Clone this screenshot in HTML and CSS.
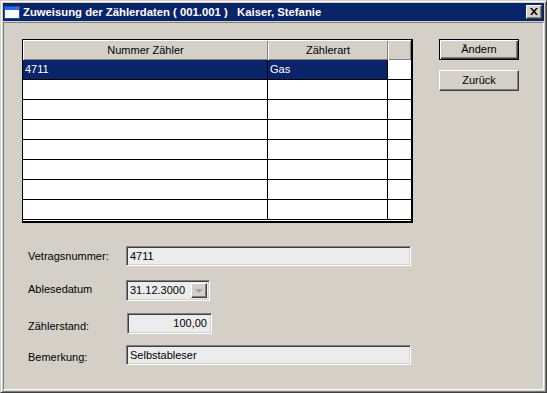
FILE: index.html
```html
<!DOCTYPE html>
<html>
<head>
    <title>Zuweisung der Zählerdaten</title>
    <link rel="stylesheet" href="styles.css">
</head>
<body>
    <div class="window">
        <div class="title-bar">
            <svg class="title-icon" width="16" height="13" viewBox="0 0 16 13">
                <rect x="0.5" y="0.5" width="15" height="12" fill="#fff" stroke="#1c4fb8"/>
                <rect x="1" y="1" width="14" height="3" fill="#1c6fe8"/>
                <rect x="12" y="1" width="2" height="2" fill="#e84830"/>
            </svg>
            <span class="title-text">Zuweisung der Zählerdaten ( 001.001 )&nbsp;&nbsp; Kaiser, Stefanie</span>
            <div class="close-btn">
                <svg width="8" height="7" viewBox="0 0 8 7">
                    <path d="M0 0 L2 0 L4 2.5 L6 0 L8 0 L5 3.5 L8 7 L6 7 L4 4.5 L2 7 L0 7 L3 3.5 Z" fill="#000"/>
                </svg>
            </div>
        </div>

        <div class="client">
            <div class="top-row">
                <div class="grid">
                    <div class="grid-row head">
                        <div class="cell">Nummer Zähler</div>
                        <div class="cell">Zählerart</div>
                        <div class="cell"></div>
                    </div>
                    <div class="grid-row">
                        <div class="cell selected">4711</div>
                        <div class="cell selected">Gas</div>
                        <div class="cell"></div>
                    </div>
                    <div class="grid-row"><div class="cell"></div><div class="cell"></div><div class="cell"></div></div>
                    <div class="grid-row"><div class="cell"></div><div class="cell"></div><div class="cell"></div></div>
                    <div class="grid-row"><div class="cell"></div><div class="cell"></div><div class="cell"></div></div>
                    <div class="grid-row"><div class="cell"></div><div class="cell"></div><div class="cell"></div></div>
                    <div class="grid-row"><div class="cell"></div><div class="cell"></div><div class="cell"></div></div>
                    <div class="grid-row"><div class="cell"></div><div class="cell"></div><div class="cell"></div></div>
                    <div class="grid-row"><div class="cell"></div><div class="cell"></div><div class="cell"></div></div>
                </div>

                <div class="buttons">
                    <div class="btn default">Ändern</div>
                    <div class="btn">Zurück</div>
                </div>
            </div>

            <div class="form">
                <div class="form-row row-1">
                    <label>Vetragsnummer:</label>
                    <div class="field wide">4711</div>
                </div>
                <div class="form-row row-2">
                    <label>Ablesedatum</label>
                    <div class="field combo">
                        <span>31.12.3000</span>
                        <div class="combo-btn"><span class="arrow"></span></div>
                    </div>
                </div>
                <div class="form-row row-3">
                    <label>Zählerstand:</label>
                    <div class="field number">100,00</div>
                </div>
                <div class="form-row row-4">
                    <label>Bemerkung:</label>
                    <div class="field wide">Selbstableser</div>
                </div>
            </div>
        </div>
    </div>
</body>
</html>
```

FILE: styles.css
```css
:root {
    --face: #d4d0c8;
    --shadow: #808080;
    --dark: #404040;
    --light: #fff;
    --navy: #0a246a;
    --field-bg: #ececec;
}

body {
    margin: 0;
    width: 547px;
    height: 393px;
    overflow: hidden;
    font-family: "Liberation Sans", Arial, sans-serif;
    font-size: 11px;
    color: #000;
    background: var(--face);
}

.window {
    box-sizing: border-box;
    width: 547px;
    height: 393px;
    padding: 2px;
    background: var(--face);
    border: 1px solid;
    border-color: var(--face) var(--dark) var(--dark) var(--face);
    box-shadow: inset 1px 1px var(--light), inset -1px -1px var(--shadow);
    display: flex;
    flex-direction: column;
}

/* Title bar */
.title-bar {
    height: 18px;
    flex-shrink: 0;
    background: var(--navy);
    display: flex;
    align-items: center;
    margin-bottom: 1px;
}

.title-icon {
    margin-left: 1px;
    margin-top: 1px;
}

.title-text {
    margin-left: 3px;
    color: #fff;
    font-weight: bold;
    font-size: 11.3px;
    white-space: nowrap;
    flex: 1;
}

.close-btn {
    box-sizing: border-box;
    width: 16px;
    height: 14px;
    margin-right: 2px;
    background: var(--face);
    border: 1px solid;
    border-color: var(--light) var(--dark) var(--dark) var(--light);
    box-shadow: inset -1px -1px var(--shadow);
    display: flex;
    align-items: center;
    justify-content: center;
}

.close-btn svg {
    margin-left: -1px;
    margin-top: -1px;
}

/* Client area */
.client {
    flex: 1;
    border: 1px solid;
    border-color: var(--shadow) var(--light) var(--light) var(--shadow);
    padding: 16px 0 0 18px;
}

.top-row {
    display: flex;
    align-items: flex-start;
}

/* Grid */
.grid {
    box-sizing: border-box;
    width: 391px;
    height: 184px;
    background: #fff;
    border-style: solid;
    border-color: #000;
    border-width: 1px 2px 2px 1px;
    overflow: hidden;
}

.grid-row {
    display: grid;
    grid-template-columns: 245px 120px 1fr;
    height: 20px;
}

.cell {
    box-sizing: border-box;
    padding-left: 2px;
    line-height: 19px;
    border-right: 1px solid #000;
    border-bottom: 1px solid #000;
    white-space: nowrap;
    overflow: hidden;
}

.cell:last-child {
    border-right: none;
}

.head .cell {
    background: var(--face);
    border: none;
    box-shadow: inset 1px 1px var(--light), inset -1px -1px var(--shadow);
    text-align: center;
    line-height: 20px;
    padding-left: 0;
}

.cell.selected {
    background: var(--navy);
    color: #fff;
}

/* Buttons */
.buttons {
    margin-left: 26px;
    display: flex;
    flex-direction: column;
    gap: 10px;
}

.btn {
    box-sizing: border-box;
    width: 80px;
    height: 21px;
    background: var(--face);
    border: 1px solid;
    border-color: var(--light) var(--dark) var(--dark) var(--light);
    box-shadow: inset -1px -1px var(--shadow);
    text-align: center;
    line-height: 18px;
}

.btn.default {
    border-color: #000;
    box-shadow: inset 1px 1px var(--light), inset -1px -1px var(--dark), inset -2px -2px var(--shadow);
}

/* Form */
.form {
    margin-top: 23px;
    padding-left: 6px;
}

.form-row {
    display: flex;
    align-items: center;
}

.form-row label {
    width: 98px;
    flex-shrink: 0;
}

.row-1 { margin-bottom: 14px; }
.row-2 { margin-bottom: 12px; }
.row-3 { margin-bottom: 11px; }

.row-2 label { padding-bottom: 3px; }
.row-3 label { padding-top: 4px; }
.row-4 label { padding-top: 4px; }

.field {
    box-sizing: border-box;
    height: 20px;
    padding: 0 3px;
    line-height: 18px;
    background: var(--field-bg);
    border: 1px solid;
    border-color: var(--shadow) var(--light) var(--light) var(--shadow);
    box-shadow: inset 1px 1px var(--dark), inset -1px -1px var(--face);
    white-space: nowrap;
}

.field.wide {
    width: 285px;
}

.field.combo {
    width: 84px;
    height: 21px;
    line-height: 19px;
    display: flex;
    justify-content: space-between;
    padding-right: 2px;
}

.combo-btn {
    box-sizing: border-box;
    width: 16px;
    height: 15px;
    margin-top: 2px;
    background: var(--face);
    border: 1px solid;
    border-color: var(--light) var(--dark) var(--dark) var(--light);
    box-shadow: inset -1px -1px var(--shadow);
    display: flex;
    align-items: center;
    justify-content: center;
}

.arrow {
    width: 0;
    height: 0;
    border-left: 4px solid transparent;
    border-right: 4px solid transparent;
    border-top: 4px solid #a0a0a0;
    margin-left: -1px;
}

.field.number {
    width: 85px;
    height: 21px;
    line-height: 19px;
    margin-left: 1px;
    text-align: right;
    padding-right: 4px;
}
```
